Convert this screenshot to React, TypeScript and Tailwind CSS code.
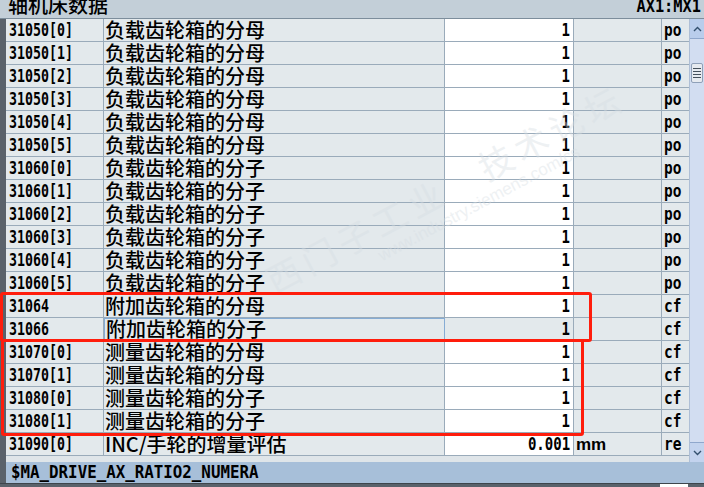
import React from "react";

type Row = { id: string; name: string; value: string; unit?: string; kind: string; focus?: boolean };

const rows: Row[] = [
  ...[0, 1, 2, 3, 4, 5].map((i) => ({ id: `31050[${i}]`, name: "负载齿轮箱的分母", value: "1", kind: "po" })),
  ...[0, 1, 2, 3, 4, 5].map((i) => ({ id: `31060[${i}]`, name: "负载齿轮箱的分子", value: "1", kind: "po" })),
  { id: "31064", name: "附加齿轮箱的分母", value: "1", kind: "cf" },
  { id: "31066", name: "附加齿轮箱的分子", value: "1", kind: "cf", focus: true },
  { id: "31070[0]", name: "测量齿轮箱的分母", value: "1", kind: "cf" },
  { id: "31070[1]", name: "测量齿轮箱的分母", value: "1", kind: "cf" },
  { id: "31080[0]", name: "测量齿轮箱的分子", value: "1", kind: "cf" },
  { id: "31080[1]", name: "测量齿轮箱的分子", value: "1", kind: "cf" },
  { id: "31090[0]", name: "INC/手轮的增量评估", value: "0.001", unit: "mm", kind: "re" },
];

const mono = { fontFamily: '"DejaVu Sans Mono", monospace' };
const cjk = { fontFamily: '"Noto Sans CJK SC", "Noto Sans", sans-serif' };

function TableRow({ r }: { r: Row }) {
  return (
    <div className="flex h-[23px] border-b border-[#9aabba] bg-[#e3e9ec] text-black">
      <div className="w-[98px] shrink-0 border-r border-[#9aabba] pl-[3px] flex items-center overflow-hidden">
        <span className="inline-block text-[17px] font-semibold leading-none origin-left scale-x-[0.78] whitespace-nowrap" style={mono}>
          {r.id}
        </span>
      </div>
      <div
        className={`w-[341px] shrink-0 flex items-center pl-[1px] overflow-hidden ${
          r.focus ? "border border-[#86acd4]" : "border-r border-[#9aabba]"
        }`}
      >
        <span className="text-[20px] font-medium leading-none whitespace-nowrap -mt-[1px]" style={cjk}>
          {r.name}
        </span>
      </div>
      <div
        className={`w-[129px] shrink-0 border-r border-[#9aabba] flex items-center justify-end pr-[3px] ${
          r.focus ? "bg-[#e3e9ec]" : "bg-white"
        }`}
      >
        <span className="inline-block text-[18px] font-semibold leading-none origin-right scale-x-[0.78] whitespace-nowrap" style={mono}>
          {r.value}
        </span>
      </div>
      <div className="w-[88px] shrink-0 border-r border-[#9aabba] flex items-center pl-[2px]">
        {r.unit && (
          <span className="text-[17px] font-semibold leading-none" style={{ fontFamily: '"Liberation Sans", sans-serif' }}>
            {r.unit}
          </span>
        )}
      </div>
      <div className="w-[27px] shrink-0 flex items-center pl-[2px]">
        <span className="inline-block text-[17px] font-semibold leading-none origin-left scale-x-[0.85]" style={mono}>
          {r.kind}
        </span>
      </div>
    </div>
  );
}

export default function App() {
  return (
    <div className="relative w-[704px] h-[487px] overflow-hidden bg-[#5a626b]">
      {/* title bar */}
      <div className="h-[19px] bg-[#c3cfd8] border-b border-[#7d8e9c] flex items-start justify-between overflow-hidden">
        <span className="text-[20px] font-medium leading-none pl-[8px] -mt-[5px]" style={cjk}>
          轴机床数据
        </span>
        <span className="inline-block text-[17px] font-semibold leading-none pr-[3px] -mt-[2px] origin-right scale-x-[0.9]" style={mono}>
          AX1:MX1
        </span>
      </div>

      <div className="flex">
        <div className="w-[6px] shrink-0" />
        <div className="w-[683px] shrink-0 bg-[#dfe5e9] h-[443px]">
          {rows.map((r) => (
            <TableRow key={r.id} r={r} />
          ))}
        </div>
        {/* scrollbar */}
        <div className="w-[15px] shrink-0 h-[443px] bg-[#d2ddf1] border-l border-[#aebfd6] flex flex-col">
          <div className="h-[20px] bg-[#b9cdec] border-b border-[#8fa7cc] flex items-center justify-center">
            <svg width="9" height="6" viewBox="0 0 9 6">
              <path d="M1 5 L4.5 1.5 L8 5" stroke="#33506e" strokeWidth="1.4" fill="none" />
            </svg>
          </div>
          <div className="mt-[24px] h-[20px] mx-[1px] bg-[#e6eaf0] border border-[#8fa0b8] rounded-[2px] flex flex-col items-center justify-center gap-[2px]">
            <div className="w-[8px] h-px bg-[#45505c]" />
            <div className="w-[8px] h-px bg-[#45505c]" />
            <div className="w-[8px] h-px bg-[#45505c]" />
            <div className="w-[8px] h-px bg-[#45505c]" />
          </div>
          <div className="flex-1" />
          <div className="h-[20px] bg-[#c3d3ee] border-t border-[#8fa7cc] flex items-center justify-center">
            <svg width="9" height="6" viewBox="0 0 9 6">
              <path d="M1 1 L4.5 4.5 L8 1" stroke="#33506e" strokeWidth="1.4" fill="none" />
            </svg>
          </div>
        </div>
      </div>

      {/* status bar */}
      <div className="flex h-[21px]">
        <div className="w-[6px] shrink-0" />
        <div className="flex-1 bg-[#a7bfd9] flex items-center pl-[5px]">
          <span className="inline-block text-[17px] font-semibold leading-none origin-left scale-x-[0.93]" style={mono}>
            $MA_DRIVE_AX_RATIO2_NUMERA
          </span>
        </div>
      </div>
      <div className="flex h-[4px] border-t border-[#3e454c]">
        <div className="ml-[660px] w-[28px] bg-white" />
      </div>

      {/* watermark */}
      <div className="pointer-events-none absolute left-[250px] top-[170px] -rotate-[28deg] text-[#d6dde3] opacity-40 select-none">
        <div className="text-[34px] leading-none tracking-[6px]" style={cjk}>
          西门子工业　技术论坛
        </div>
        <div className="text-[17px] leading-none ml-[110px] mt-[4px]" style={{ fontFamily: '"Liberation Sans", sans-serif' }}>
          www.industry.siemens.com/cs
        </div>
      </div>

      {/* red annotation boxes */}
      <div className="pointer-events-none absolute left-0 top-[292px] w-[592px] h-[50px] border-[3px] border-[#ff1d0c] rounded-[3px]" />
      <div className="pointer-events-none absolute left-[1px] top-[339px] w-[583px] h-[97px] border-[3px] border-[#ff1d0c] rounded-[3px]" />
    </div>
  );
}
